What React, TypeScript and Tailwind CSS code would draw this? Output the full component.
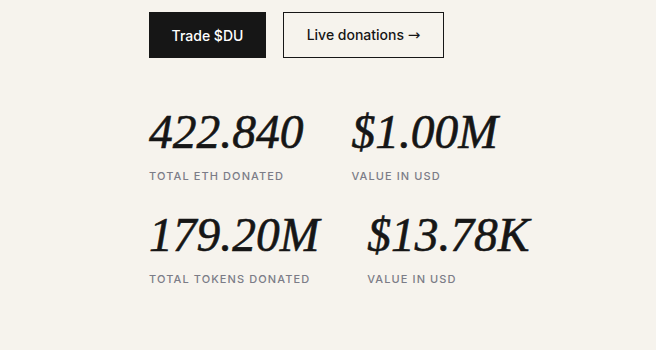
const stats = [
  [
    { value: '422.840', label: 'Total ETH donated' },
    { value: '$1.00M', label: 'Value in USD' },
  ],
  [
    { value: '179.20M', label: 'Total tokens donated' },
    { value: '$13.78K', label: 'Value in USD' },
  ],
];

export default function App() {
  return (
    <div className="h-[350px] w-[656px] overflow-hidden bg-[#f6f3ed] font-['Inter',sans-serif] text-[#161616]">
      <div className="px-[149px] pt-3">
        <div className="flex gap-[17px]">
          <button
            type="button"
            className="h-[46px] w-[117px] bg-[#161616] text-[14px] font-medium text-white"
          >
            Trade $DU
          </button>
          <button
            type="button"
            className="h-[46px] w-[161px] border border-[#161616] text-[14px] font-medium text-[#161616]"
          >
            Live donations{' '}
            <span className="font-['DejaVu_Sans',sans-serif] text-[15px] font-normal">→</span>
          </button>
        </div>

        <div className="mt-[51px] space-y-[27px]">
          {stats.map((row, i) => (
            <div key={i} className="flex gap-12">
              {row.map((stat) => (
                <div key={stat.label + stat.value}>
                  <p className="font-['Liberation_Serif',serif] text-[47.5px] italic leading-[46px] [-webkit-text-stroke:0.6px_#161616]">
                    {stat.value}
                  </p>
                  <p className="mt-[13px] text-[11px] font-medium uppercase tracking-[0.1em] text-[#7b7c87]">
                    {stat.label}
                  </p>
                </div>
              ))}
            </div>
          ))}
        </div>
      </div>
    </div>
  );
}
